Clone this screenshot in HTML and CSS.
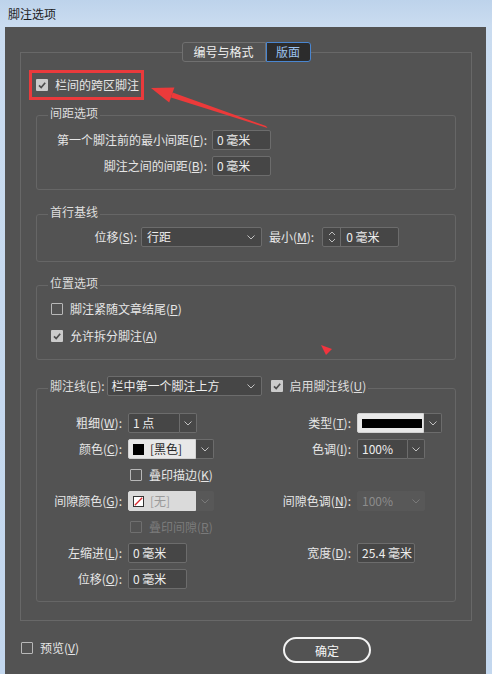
FILE: index.html
```html
<!DOCTYPE html>
<html lang="zh-CN">
<head>
    <meta charset="UTF-8">
    <meta name="viewport" content="width=device-width, initial-scale=1.0">
    <title>脚注选项</title>
    <link rel="stylesheet" href="styles.css">
</head>
<body>
<div class="window">
    <div class="titlebar">脚注选项</div>

    <div class="client">
        <div class="panel">
            <div class="tabs">
                <div class="tab tab-format">编号与格式</div>
                <div class="tab tab-layout active">版面</div>
            </div>

            <div class="callout">
                <div class="check-row">
                    <span class="box checked"><svg viewBox="0 0 12 12"><polyline points="3,6.3 5.2,8.5 9.2,3.8"/></svg></span>
                    <span>栏间的跨区脚注</span>
                </div>
            </div>

            <!-- 间距 -->
            <div class="group g-spacing">
                <div class="legend">间距选项</div>
                <div class="spacing-grid">
                    <span class="lbl">第一个脚注前的最小间距(<u>F</u>):</span>
                    <div class="field w59">0 毫米</div>
                    <span class="lbl">脚注之间的间距(<u>B</u>):</span>
                    <div class="field w59">0 毫米</div>
                </div>
            </div>

            <!-- 首行基线 -->
            <div class="group g-baseline">
                <div class="legend">首行基线</div>
                <div class="baseline-row">
                    <span class="lbl baseline-lbl">位移(<u>S</u>):</span>
                    <div class="select w121">
                        <span>行距</span>
                        <svg class="chev" viewBox="0 0 8 5"><polyline points="0.5,0.5 4,4 7.5,0.5"/></svg>
                    </div>
                    <span class="lbl min-lbl">最小(<u>M</u>):</span>
                    <div class="spin">
                        <div class="spin-btn">
                            <svg viewBox="0 0 8 14"><polyline points="1,5 4,2 7,5"/><polyline points="1,9 4,12 7,9"/></svg>
                        </div>
                        <span>0 毫米</span>
                    </div>
                </div>
            </div>

            <!-- 位置 -->
            <div class="group g-position">
                <div class="legend">位置选项</div>
                <div class="check-list">
                    <div class="check-row">
                        <span class="box"></span>
                        <span>脚注紧随文章结尾(<u>P</u>)</span>
                    </div>
                    <div class="check-row">
                        <span class="box checked"><svg viewBox="0 0 12 12"><polyline points="3,6.3 5.2,8.5 9.2,3.8"/></svg></span>
                        <span>允许拆分脚注(<u>A</u>)</span>
                    </div>
                </div>
            </div>

            <!-- 脚注线 -->
            <div class="group g-rule">
                <div class="legend legend-row">
                    <span class="lbl">脚注线(<u>E</u>):</span>
                    <div class="select w155">
                        <span>栏中第一个脚注上方</span>
                        <svg class="chev" viewBox="0 0 8 5"><polyline points="0.5,0.5 4,4 7.5,0.5"/></svg>
                    </div>
                    <div class="check-row enable">
                        <span class="box checked"><svg viewBox="0 0 12 12"><polyline points="3,6.3 5.2,8.5 9.2,3.8"/></svg></span>
                        <span>启用脚注线(<u>U</u>)</span>
                    </div>
                </div>

                <div class="rule-grid">
                    <span class="lbl">粗细(<u>W</u>):</span>
                    <div class="combo">
                        <div class="cf w52">1 点</div>
                        <div class="cb"><svg class="chev" viewBox="0 0 8 5"><polyline points="0.5,0.5 4,4 7.5,0.5"/></svg></div>
                    </div>
                    <span class="lbl">类型(<u>T</u>):</span>
                    <div class="combo">
                        <div class="cf light w67"><span class="stroke-sample"></span></div>
                        <div class="cb w18"><svg class="chev" viewBox="0 0 8 5"><polyline points="0.5,0.5 4,4 7.5,0.5"/></svg></div>
                    </div>

                    <span class="lbl">颜色(<u>C</u>):</span>
                    <div class="combo">
                        <div class="cf light w68"><span class="swatch black"></span><span class="swatch-name">[黑色]</span></div>
                        <div class="cb w18"><svg class="chev" viewBox="0 0 8 5"><polyline points="0.5,0.5 4,4 7.5,0.5"/></svg></div>
                    </div>
                    <span class="lbl">色调(<u>I</u>):</span>
                    <div class="combo">
                        <div class="cf w51">100%</div>
                        <div class="cb"><svg class="chev" viewBox="0 0 8 5"><polyline points="0.5,0.5 4,4 7.5,0.5"/></svg></div>
                    </div>

                    <div class="check-row span">
                        <span class="box"></span>
                        <span>叠印描边(<u>K</u>)</span>
                    </div>

                    <span class="lbl">间隙颜色(<u>G</u>):</span>
                    <div class="combo disabled">
                        <div class="cf light w68"><span class="swatch none"><svg viewBox="0 0 11 11"><line x1="1" y1="10" x2="10" y2="1"/></svg></span><span class="swatch-name">[无]</span></div>
                        <div class="cb w18"><svg class="chev" viewBox="0 0 8 5"><polyline points="0.5,0.5 4,4 7.5,0.5"/></svg></div>
                    </div>
                    <span class="lbl">间隙色调(<u>N</u>):</span>
                    <div class="combo disabled">
                        <div class="cf w51">100%</div>
                        <div class="cb"><svg class="chev" viewBox="0 0 8 5"><polyline points="0.5,0.5 4,4 7.5,0.5"/></svg></div>
                    </div>

                    <div class="check-row span off">
                        <span class="box"></span>
                        <span>叠印间隙(<u>R</u>)</span>
                    </div>

                    <span class="lbl">左缩进(<u>L</u>):</span>
                    <div class="field w59">0 毫米</div>
                    <span class="lbl">宽度(<u>D</u>):</span>
                    <div class="field w58">25.4 毫米</div>

                    <span class="lbl">位移(<u>O</u>):</span>
                    <div class="field w59">0 毫米</div>
                </div>
            </div>
        </div>

        <div class="footer">
            <div class="check-row preview">
                <span class="box"></span>
                <span>预览(<u>V</u>)</span>
            </div>
            <button class="btn-ok">确定</button>
        </div>
    </div>

    <!-- annotation arrows drawn over the dialog -->
    <svg class="marks" viewBox="0 0 492 674">
        <polygon points="266,126 267.5,128 171,97.4 172.6,92.6" />
        <polygon points="151,88 174.4,87.4 169.2,102.6" />
        <polygon class="tip" points="321,345 332,349 326,355" />
    </svg>
</div>
</body>
</html>
```

FILE: styles.css
```css
* {
    box-sizing: border-box;
    margin: 0;
    padding: 0;
}

body {
    width: 492px;
    height: 674px;
    overflow: hidden;
    background: linear-gradient(#bdd3eb, #cadcf0 26px, #c3d7ee);
    font-family: "Noto Sans CJK SC", "Noto Sans", sans-serif;
    font-size: 12px;
    line-height: 16px;
}

u {
    text-decoration: underline;
    text-underline-offset: 1px;
}

.window {
    position: relative;
    display: flex;
    flex-direction: column;
    height: 674px;
}

.titlebar {
    height: 27px;
    padding-left: 8px;
    display: flex;
    align-items: center;
    color: #1c1c1c;
}

.client {
    margin-left: 5px;
    width: 481px;
    flex: 1;
    background: #535353;
    padding: 25px 14px 0 15px;
    color: #e6e6e6;
}

.panel {
    height: 569px;
    border: 1px solid #686868;
    padding: 0 15px;
}

/* tabs sit on the panel's top border */
.tabs {
    display: flex;
    justify-content: center;
    margin-top: -11px;
}

.tab {
    height: 20px;
    line-height: 18px;
    text-align: center;
    border: 1px solid #707070;
    border-radius: 3px 0 0 3px;
    background: #535353;
    color: #f0f0f0;
}

.tab-format {
    width: 84px;
}

.tab-layout {
    width: 45px;
}

.tab.active {
    border-color: #4a86d0;
    border-radius: 0 3px 3px 0;
    background: #2c2c2c;
    color: #9cc2ee;
}

.callout {
    width: 115px;
    height: 30px;
    margin: 8px 0 0 -7px;
    border: 3px solid #ea3a3c;
    display: flex;
    align-items: center;
    padding-left: 4px;
}

.check-row {
    display: flex;
    align-items: center;
    gap: 7px;
    height: 16px;
    white-space: nowrap;
}

.box {
    width: 12px;
    height: 12px;
    border: 1px solid #b8b8b8;
    border-radius: 1px;
    flex: none;
}

.box.checked {
    border: none;
    background: #cbcbcb;
}

.box svg {
    display: block;
    width: 12px;
    height: 12px;
}

.box svg polyline {
    fill: none;
    stroke: #4e4e4e;
    stroke-width: 1.7;
}

.off {
    color: #7b7b7b;
}

.off .box {
    border-color: #6f6f6f;
}

/* groups */
.group {
    border: 1px solid #666;
    border-radius: 3px;
}

.legend {
    width: fit-content;
    margin: -11px 0 0 11px;
    padding: 0 2px;
    background: #535353;
    color: #dedede;
}

.g-spacing {
    margin-top: 15px;
    padding-bottom: 13px;
}

.g-baseline {
    margin-top: 24px;
    padding-bottom: 14px;
}

.g-position {
    margin-top: 23px;
    padding-bottom: 15px;
}

.g-rule {
    margin-top: 28px;
    padding-bottom: 12px;
}

.lbl {
    white-space: nowrap;
    text-align: right;
}

.field {
    height: 20px;
    border: 1px solid #6c6c6c;
    border-radius: 2px;
    background: #464646;
    padding-left: 4px;
    line-height: 18px;
    color: #ededed;
    white-space: nowrap;
}

.w59 { width: 59px; }
.w58 { width: 58px; }
.w121 { width: 121px; }
.w155 { width: 155px; }
.w52 { width: 52px; }
.w51 { width: 51px; }
.w67 { width: 67px; }
.w68 { width: 68px; }

.spacing-grid {
    display: grid;
    grid-template-columns: 170px 59px;
    column-gap: 5px;
    row-gap: 6px;
    align-items: center;
    margin-top: 9px;
}

.baseline-row {
    display: flex;
    align-items: center;
    margin-top: 7px;
}

.baseline-lbl {
    width: 100px;
    margin-right: 4px;
}

.min-lbl {
    margin: 0 8px 0 7px;
}

.select {
    height: 20px;
    border: 1px solid #6c6c6c;
    border-radius: 2px;
    background: #464646;
    display: flex;
    align-items: center;
    justify-content: space-between;
    padding: 0 6px 0 5px;
    color: #ededed;
    white-space: nowrap;
}

.chev {
    width: 8px;
    height: 5px;
    display: block;
}

.chev polyline {
    fill: none;
    stroke: #c2c2c2;
    stroke-width: 1;
}

.spin {
    width: 77px;
    height: 20px;
    border: 1px solid #6c6c6c;
    border-radius: 2px;
    background: #464646;
    display: flex;
    align-items: center;
    color: #ededed;
}

.spin-btn {
    width: 18px;
    height: 18px;
    border-right: 1px solid #6c6c6c;
    display: flex;
    align-items: center;
    justify-content: center;
    margin-right: 5px;
}

.spin-btn svg {
    width: 8px;
    height: 14px;
}

.spin-btn polyline {
    fill: none;
    stroke: #bdbdbd;
    stroke-width: 1;
}

.check-list {
    display: flex;
    flex-direction: column;
    gap: 11px;
    margin: 10px 0 0 14px;
}

/* footnote rule group */
.legend-row {
    display: flex;
    align-items: center;
    height: 20px;
    margin-top: -13px;
}

.legend-row .lbl {
    margin-right: 2px;
}

.legend-row .select {
    padding-left: 4px;
}

.enable {
    margin: 0 0 0 9px;
}

.rule-grid {
    display: grid;
    grid-template-columns: 85px 130px 1fr 98px;
    grid-auto-rows: 20px;
    column-gap: 6px;
    row-gap: 6px;
    align-items: center;
    justify-items: start;
    margin-top: 17px;
}

.rule-grid .lbl {
    justify-self: end;
}

.rule-grid .span {
    grid-column: 2 / 5;
    margin-left: 2px;
}

.combo {
    display: flex;
    height: 20px;
}

.cf {
    height: 20px;
    border: 1px solid #6c6c6c;
    border-radius: 2px 0 0 2px;
    background: #464646;
    padding-left: 4px;
    line-height: 18px;
    color: #ededed;
    display: flex;
    align-items: center;
    white-space: nowrap;
}

.cf.light {
    background: #e8e8e8;
    border-color: #d2d2d2;
    color: #262626;
    padding-left: 4px;
}

.cb {
    width: 17px;
    height: 20px;
    border: 1px solid #6c6c6c;
    border-left: none;
    border-radius: 0 2px 2px 0;
    background: #484848;
    display: flex;
    align-items: center;
    justify-content: center;
}

.cb.w18 {
    width: 18px;
}

.stroke-sample {
    width: 60px;
    height: 9px;
    background: #000;
}

.swatch {
    width: 11px;
    height: 11px;
    margin-right: 6px;
    flex: none;
}

.swatch.black {
    background: #000;
}

.swatch.none {
    background: #fff;
    border: 1px solid #333;
}

.swatch.none svg {
    display: block;
    width: 9px;
    height: 9px;
}

.swatch.none line {
    stroke: #d8262c;
    stroke-width: 1.6;
}

.combo.disabled .cf {
    background: #585858;
    border-color: #585858;
    color: #8c8c8c;
}

.combo.disabled .cf.light {
    background: #dadada;
    border-color: #dadada;
    color: #9a9a9a;
}

.combo.disabled .cb {
    background: #585858;
    border-color: #585858;
}

.combo.disabled .chev polyline {
    stroke: #7a7a7a;
}

/* footer */
.footer {
    display: flex;
    align-items: center;
    justify-content: space-between;
    height: 26px;
    margin-top: 16px;
}

.preview {
    margin: -5px 0 0 1px;
}

.btn-ok {
    width: 88px;
    height: 26px;
    margin-right: 101px;
    border: 2px solid #f2f2f2;
    border-radius: 13px;
    background: #535353;
    color: #f5f5f5;
    font-family: "Noto Sans CJK SC", "Noto Sans", sans-serif;
    font-size: 12px;
}

.marks {
    position: absolute;
    top: 0;
    left: 0;
    width: 492px;
    height: 674px;
    pointer-events: none;
}

.marks polygon {
    fill: #ec3a3a;
}

.marks .tip {
    fill: #f2343e;
}
```
